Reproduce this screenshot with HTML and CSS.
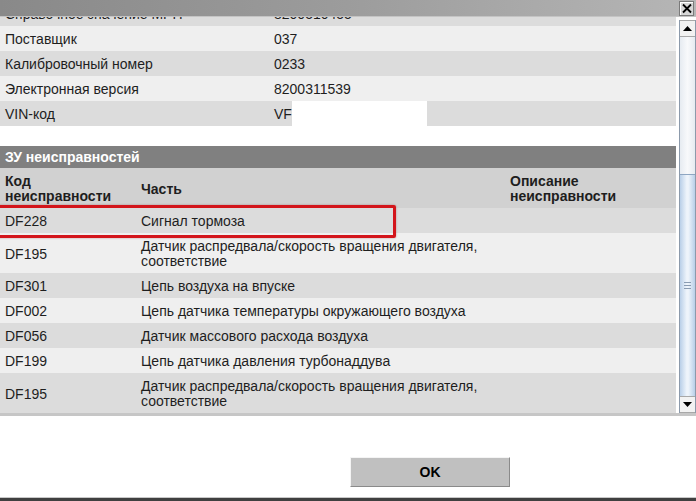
FILE: index.html
```html
<!DOCTYPE html>
<html lang="ru">
  <head>
    <meta charset="UTF-8" />
    <meta name="viewport" content="width=device-width, initial-scale=1.0" />
    <title>ЗУ неисправностей</title>
    <link rel="stylesheet" href="styles.css">
  </head>
  <body>
    <div class="window">
      <div class="titlebar">
        <span class="close">
          <svg width="12" height="11" viewBox="0 0 12 11">
            <path d="M2 1.5 L10 9.5 M10 1.5 L2 9.5" stroke="#000" stroke-width="1.8" />
          </svg>
        </span>
      </div>

      <div class="pane">
        <div class="content">
          <!-- Данные блока -->
          <div class="info">
            <div class="info-row cut">
              <div>Справочное значение МРП</div>
              <div>8200510455</div>
            </div>
            <div class="info-row">
              <div>Поставщик</div>
              <div>037</div>
            </div>
            <div class="info-row">
              <div>Калибровочный номер</div>
              <div>0233</div>
            </div>
            <div class="info-row">
              <div>Электронная версия</div>
              <div>8200311539</div>
            </div>
            <div class="info-row">
              <div>VIN-код</div>
              <div class="vin"><span>VF</span><span class="hidden-vin"></span></div>
            </div>
          </div>

          <!-- Список неисправностей -->
          <div class="faults">
            <div class="section-title">ЗУ неисправностей</div>
            <div class="fault-row head">
              <div>Код<br />неисправности</div>
              <div>Часть</div>
              <div>Описание<br />неисправности</div>
            </div>
            <div class="fault-row">
              <div>DF228</div>
              <div>Сигнал тормоза</div>
              <div></div>
            </div>
            <div class="fault-row">
              <div>DF195</div>
              <div>Датчик распредвала/скорость вращения двигателя, соответствие</div>
              <div></div>
            </div>
            <div class="fault-row">
              <div>DF301</div>
              <div>Цепь воздуха на впуске</div>
              <div></div>
            </div>
            <div class="fault-row">
              <div>DF002</div>
              <div>Цепь датчика температуры окружающего воздуха</div>
              <div></div>
            </div>
            <div class="fault-row">
              <div>DF056</div>
              <div>Датчик массового расхода воздуха</div>
              <div></div>
            </div>
            <div class="fault-row">
              <div>DF199</div>
              <div>Цепь датчика давления турбонаддува</div>
              <div></div>
            </div>
            <div class="fault-row">
              <div>DF195</div>
              <div>Датчик распредвала/скорость вращения двигателя, соответствие</div>
              <div></div>
            </div>
            <div class="highlight"></div>
          </div>
        </div>

        <div class="scrollbar">
          <div class="arrow">
            <svg width="9" height="5" viewBox="0 0 9 5"><path d="M0 5 L4.5 0 L9 5 Z" fill="#000" /></svg>
          </div>
          <div class="track"></div>
          <div class="thumb"><span class="grip"></span></div>
          <div class="arrow">
            <svg width="9" height="5" viewBox="0 0 9 5"><path d="M0 0 L9 0 L4.5 5 Z" fill="#000" /></svg>
          </div>
        </div>
      </div>

      <div class="footer">
        <button class="ok">OK</button>
      </div>
    </div>
  </body>
</html>
```

FILE: styles.css
```css
body,
html {
  margin: 0;
  padding: 0;
  background-color: #fff;
}

.window {
  width: 696px;
  height: 501px;
  display: flex;
  flex-direction: column;
  font-family: "Liberation Sans", Arial, sans-serif;
  font-size: 14px;
  color: #1e1e1e;
  overflow: hidden;
}

.titlebar {
  height: 16px;
  flex-shrink: 0;
  background: linear-gradient(to right, #898989, #9c9c9c 50%, #b6b6b6);
  border-bottom: 1px solid #c4c4c4;
  display: flex;
  justify-content: flex-end;
  position: relative;
  z-index: 2;
}

.close {
  width: 13px;
  height: 13px;
  margin: 1px 2px 0 0;
  background-color: #d6d6d6;
  border: 1px solid #7a7a7a;
  box-shadow: inset 1px 1px 0 #fff;
  display: flex;
  align-items: center;
  justify-content: center;
}

.pane {
  height: 396px;
  flex-shrink: 0;
  display: flex;
  border-bottom: 3px solid #c6c6c6;
}

.content {
  width: 676px;
  overflow: hidden;
}

.info {
  margin-top: -16px;
}

.info-row {
  display: grid;
  grid-template-columns: 269px 1fr;
  height: 25px;
  line-height: 15px;
}

.info-row > div {
  padding: 6px 5px 4px;
}

.info-row:nth-child(odd) {
  background-color: #dcdcdc;
}

.info-row:nth-child(even) {
  background-color: #efefef;
}

.info-row .vin {
  display: flex;
  padding: 0 0 0 5px;
}

.vin span:first-child {
  align-self: center;
  padding-top: 2px;
}

.hidden-vin {
  width: 135px;
  background-color: #fff;
}

.faults {
  margin-top: 20px;
  position: relative;
}

.section-title {
  height: 22px;
  line-height: 23px;
  padding-left: 5px;
  background-color: #808080;
  color: #fff;
  font-weight: bold;
}

.fault-row {
  display: grid;
  grid-template-columns: 136px 369px 1fr;
  min-height: 25px;
  line-height: 15px;
  align-items: center;
}

.fault-row > div {
  padding: 6px 5px 4px;
}

.fault-row.head {
  background-color: #d1d1d1;
  font-weight: bold;
}

.fault-row:nth-child(odd) {
  background-color: #dcdcdc;
}

.fault-row:nth-child(even) {
  background-color: #efefef;
}

.fault-row.head:nth-child(2) {
  background-color: #d1d1d1;
}

.highlight {
  position: absolute;
  top: 59px;
  left: -4px;
  width: 394px;
  height: 27px;
  border: 3px solid #d3151b;
  border-radius: 2px;
  box-shadow: 0 0 2px rgba(120, 0, 0, 0.4);
}

.scrollbar {
  width: 15px;
  margin: 3px 0 0 3px;
  display: flex;
  flex-direction: column;
  border-left: 1px solid #8c9aab;
  border-right: 1px solid #8c9aab;
}

.arrow {
  height: 15px;
  flex-shrink: 0;
  background-color: #f2f2f2;
  border-top: 1px solid #a8a8a8;
  border-bottom: 1px solid #a8a8a8;
  display: flex;
  align-items: center;
  justify-content: center;
}

.track {
  height: 137px;
  background: linear-gradient(to right, #e6ebf1, #f8f9fb 50%, #e6ebf1);
}

.thumb {
  flex: 1;
  background: linear-gradient(to right, #b9cfe8, #eef4fb 45%, #eef4fb 55%, #b9cfe8);
  border-top: 1px solid #8ea6c2;
  display: flex;
  align-items: center;
  justify-content: center;
}

.grip {
  width: 7px;
  height: 5px;
  border-top: 1px solid #8a9cb2;
  border-bottom: 1px solid #8a9cb2;
  background: linear-gradient(#8a9cb2, #8a9cb2) center / 100% 1px no-repeat;
}

.footer {
  flex: 1;
  border-bottom: 3px solid #404040;
  box-shadow: inset 0 -1px 0 #c8c8c8;
}

.ok {
  display: block;
  margin: 41px 0 0 350px;
  width: 160px;
  height: 30px;
  background-color: #c0c0c0;
  border: 1px solid #8a8a8a;
  border-top-color: #f4f4f4;
  border-left-color: #f4f4f4;
  font-family: "Liberation Sans", Arial, sans-serif;
  font-size: 14px;
  font-weight: bold;
  color: #000;
}
```
